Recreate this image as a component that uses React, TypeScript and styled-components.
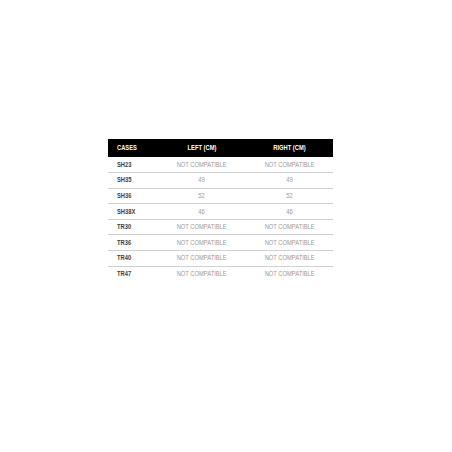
import React from 'react'
import styled, { createGlobalStyle } from 'styled-components'

const GlobalStyle = createGlobalStyle`
  html, body {
    margin: 0;
    padding: 0;
    background: #fff;
  }
`

const Page = styled.div`
  width: 452px;
  height: 452px;
  padding: 139px 0 0 108px;
  box-sizing: border-box;
  font-family: 'Liberation Sans', Arial, sans-serif;
`

const Table = styled.table`
  width: 225px;
  border-collapse: collapse;
  table-layout: fixed;
`

const HeadRow = styled.tr`
  background: #000;
  height: 18px;
`

const Th = styled.th<{ $first?: boolean }>`
  color: #fff;
  font-size: 8px;
  font-weight: 700;
  text-align: ${p => (p.$first ? 'left' : 'center')};
  padding: 0 0 0 ${p => (p.$first ? '9px' : '0')};
  line-height: 1;
`

const Row = styled.tr<{ $last?: boolean }>`
  height: 15.6px;
  border-bottom: 1px solid ${p => (p.$last ? 'transparent' : '#cfcfcf')};
`

const CaseCell = styled.td`
  color: #3d3d3d;
  font-size: 8px;
  font-weight: 700;
  padding: 0 0 0 9px;
  line-height: 1;
`

const ValueCell = styled.td`
  color: #999;
  font-size: 8px;
  text-align: center;
  padding: 0;
  line-height: 1;
`

// condensed look: the source uses a narrow face we don't have
const Narrow = styled.span<{ $left?: boolean }>`
  display: inline-block;
  white-space: nowrap;
  transform: scaleX(0.72);
  transform-origin: ${p => (p.$left ? 'left center' : 'center center')};
`

const rows: [string, string, string][] = [
  ['SH23', 'NOT COMPATIBLE', 'NOT COMPATIBLE'],
  ['SH35', '49', '49'],
  ['SH36', '52', '52'],
  ['SH38X', '46', '46'],
  ['TR30', 'NOT COMPATIBLE', 'NOT COMPATIBLE'],
  ['TR36', 'NOT COMPATIBLE', 'NOT COMPATIBLE'],
  ['TR40', 'NOT COMPATIBLE', 'NOT COMPATIBLE'],
  ['TR47', 'NOT COMPATIBLE', 'NOT COMPATIBLE'],
]

const App = () => {
  return (
    <Page>
      <GlobalStyle />
      <Table>
        <colgroup>
          <col style={{ width: 49 }} />
          <col style={{ width: 89 }} />
          <col style={{ width: 87 }} />
        </colgroup>
        <thead>
          <HeadRow>
            <Th $first><Narrow $left>CASES</Narrow></Th>
            <Th><Narrow>LEFT (CM)</Narrow></Th>
            <Th><Narrow>RIGHT (CM)</Narrow></Th>
          </HeadRow>
        </thead>
        <tbody>
          {rows.map((r, i) => (
            <Row key={r[0]} $last={i === rows.length - 1}>
              <CaseCell><Narrow $left>{r[0]}</Narrow></CaseCell>
              <ValueCell><Narrow>{r[1]}</Narrow></ValueCell>
              <ValueCell><Narrow>{r[2]}</Narrow></ValueCell>
            </Row>
          ))}
        </tbody>
      </Table>
    </Page>
  )
}

export default App
